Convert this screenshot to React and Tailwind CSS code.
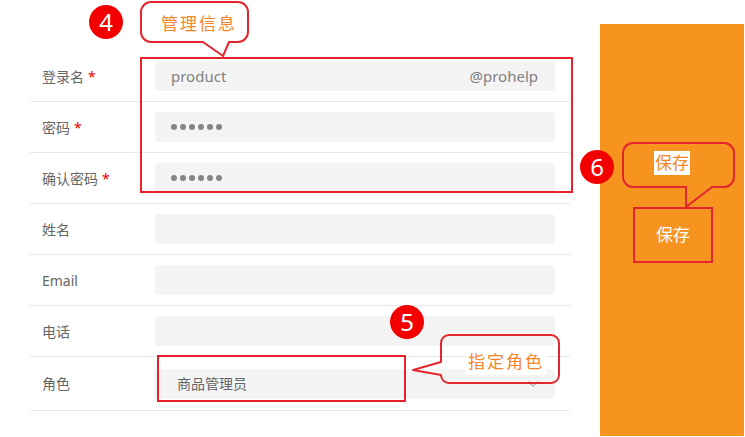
import React from 'react';
import { ChevronDown } from 'lucide-react';

// form rows: label, required flag, field content
const rows = [
  { label: '登录名', required: true, kind: 'login' },
  { label: '密码', required: true, kind: 'password' },
  { label: '确认密码', required: true, kind: 'password' },
  { label: '姓名' },
  { label: 'Email' },
  { label: '电话' },
];

const Dots = () => (
  <div className="flex gap-[3px]">
    {[0, 1, 2, 3, 4, 5].map((i) => (
      <span key={i} className="w-[6px] h-[6px] rounded-full bg-[#858585]" />
    ))}
  </div>
);

const Field = ({ kind }) => (
  <div className="w-[400px] h-[30px] rounded-[4px] bg-[#f4f4f4] flex items-center justify-between pl-[16px] pr-[17px] text-[15px] text-[#7f7f7f]">
    {kind === 'login' && (
      <>
        <span>product</span>
        <span>@prohelp</span>
      </>
    )}
    {kind === 'password' && <Dots />}
  </div>
);

const Badge = ({ n, className }) => (
  <div className={`absolute w-[34px] h-[34px] rounded-full bg-[#f20000] text-white text-[24px] leading-none flex items-center justify-center ${className}`}>
    {n}
  </div>
);

const App = () => {
  return (
    <div className="relative w-[745px] h-[437px] bg-white flex overflow-hidden font-['Noto_Sans','Noto_Sans_CJK_SC',sans-serif]">
      {/* form */}
      <div className="w-[600px] pl-[30px] pt-[51px]">
        <div className="w-[540px]">
          {rows.map((r) => (
            <div key={r.label} className="h-[51px] border-b border-[#e8e8e8] flex items-center">
              <div className="w-[125px] pl-[12px] text-[14px] text-[#666]">
                {r.label}
                {r.required && <span className="text-[#e00] ml-[4px]">*</span>}
              </div>
              <Field kind={r.kind} />
            </div>
          ))}
          <div className="h-[54px] border-b border-[#e8e8e8] flex items-center">
            <div className="w-[125px] pl-[12px] text-[14px] text-[#666]">角色</div>
            <div className="relative w-[400px] h-[30px] rounded-[4px] bg-[#f4f4f4] flex items-center pl-[22px] text-[14px] text-[#666]">
              商品管理员
              <ChevronDown className="absolute right-[13px] top-[6px] text-[#b5b5b5]" size={18} strokeWidth={1.5} />
            </div>
          </div>
        </div>
      </div>

      {/* orange side panel */}
      <div className="mt-[24px] w-[144px] h-[412px] bg-[#f7931f] pt-[183px] pl-[33px]">
        <div className="w-[80px] h-[56px] border-2 border-[#e3262d] flex items-center justify-center text-white text-[17px]">
          保存
        </div>
      </div>

      {/* annotations */}
      <div className="absolute left-[140px] top-[57px] w-[433px] h-[136px] border-2 border-[#e8222c]" />
      <div className="absolute left-[157px] top-[355px] w-[249px] h-[47px] border-2 border-[#e8222c]" />

      <svg className="absolute left-0 top-0" width="745" height="437" fill="none">
        <path
          d="M151,2 H238 A10,10 0 0 1 248,12 V32 A10,10 0 0 1 238,42 H229 L223,56 L203,42 H151 A10,10 0 0 1 141,32 V12 A10,10 0 0 1 151,2 Z"
          fill="white" stroke="#e3262d" strokeWidth="2" strokeLinejoin="round"
        />
        <path
          d="M449,335 H551 A8,8 0 0 1 559,343 V375 A8,8 0 0 1 551,383 H449 A8,8 0 0 1 441,375 L413,370 L441,362 V343 A8,8 0 0 1 449,335 Z"
          stroke="#e3262d" strokeWidth="2" strokeLinejoin="round"
        />
        <path
          d="M633,143 H724 A10,10 0 0 1 734,153 V177 A10,10 0 0 1 724,187 H712 L686,207 V187 H633 A10,10 0 0 1 623,177 V153 A10,10 0 0 1 633,143 Z"
          stroke="#e3262d" strokeWidth="2" strokeLinejoin="round"
        />
      </svg>

      <div className="absolute left-[466px] top-[349px] bg-white px-[2px] text-[17px] leading-[26px] tracking-[2px] text-[#f5862a]">指定角色</div>
      <div className="absolute left-[161px] top-[11px] text-[17px] leading-[26px] tracking-[2px] text-[#f5862a]">管理信息</div>
      <div className="absolute left-[654px] top-[151px] bg-white px-[1px] text-[17px] leading-[24px] text-[#f5862a]">保存</div>

      <Badge n="4" className="left-[89px] top-[5px]" />
      <Badge n="5" className="left-[390px] top-[305px]" />
      <Badge n="6" className="left-[580px] top-[150px]" />
    </div>
  );
};

export default App;
